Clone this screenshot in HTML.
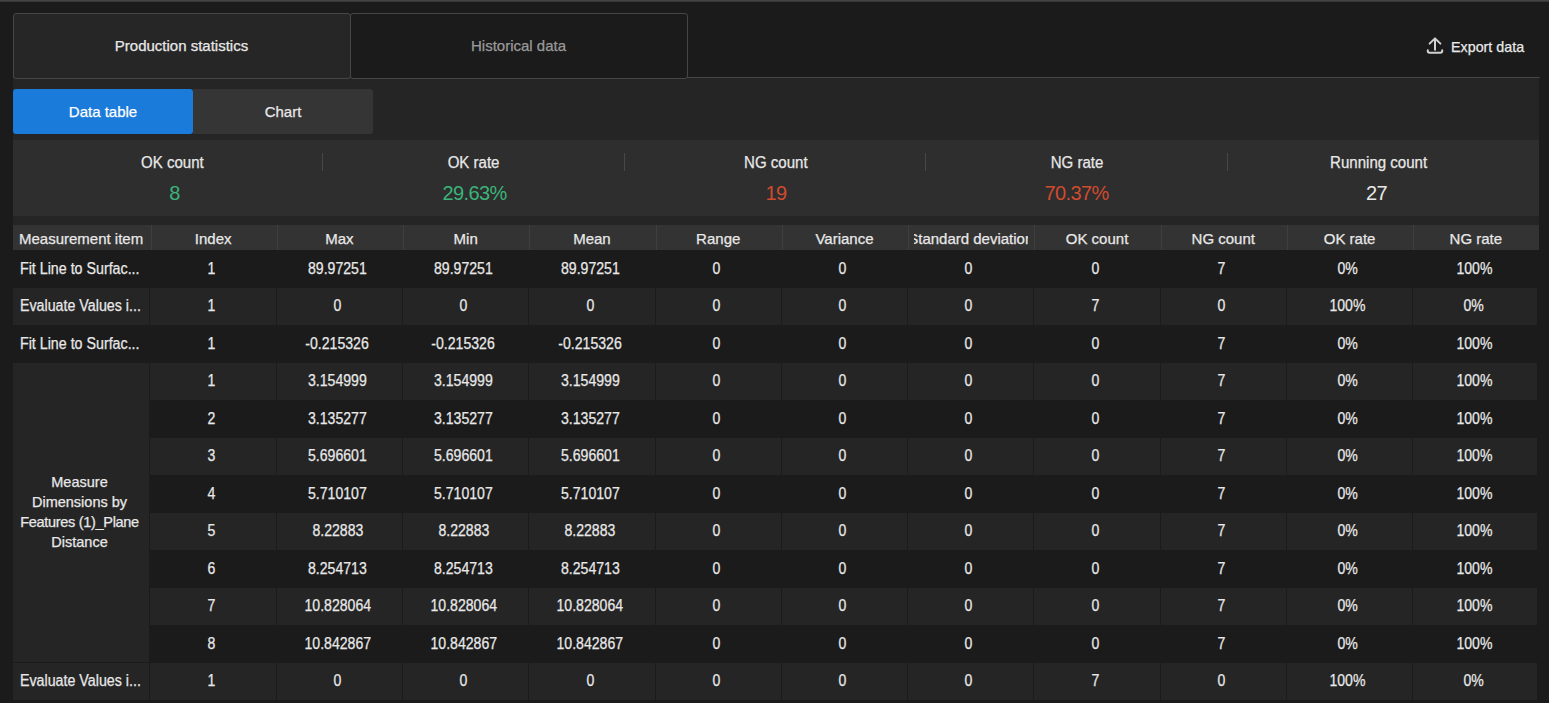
<!DOCTYPE html>
<html><head><meta charset="utf-8"><title>Production statistics</title>
<style>
*{margin:0;padding:0;box-sizing:border-box}
html,body{width:1549px;height:703px;overflow:hidden;background:#1b1b1b;font-family:"Liberation Sans", sans-serif;color:#e8e8e8}
body{-webkit-text-stroke:0.25px currentColor}
.a{position:absolute}
.t{position:absolute;white-space:nowrap;font-size:15px;line-height:18px}
.c{text-align:center}
.cell{position:absolute;overflow:hidden;white-space:nowrap;font-size:15px;line-height:18px;text-align:center}
.d{position:absolute;white-space:nowrap;font-size:16px;line-height:20px;text-align:center}
.d span{display:inline-block;transform:scaleX(.88)}
.d.l{text-align:left} .d.l span{transform-origin:0 50%;transform:scaleX(.89)}
</style></head><body>

<div class="a" style="left:0;top:0;width:1549px;height:2px;background:linear-gradient(#444444,#444444 50%,#2a2a2a)"></div>
<div class="a" style="left:13px;top:77px;width:1526px;height:623px;background:#252525;"></div>
<div class="a" style="left:12.5px;top:76.5px;width:1527px;height:1.5px;background:#464646;border-radius:1px"></div>
<div class="a" style="left:12.5px;top:12.5px;width:338.5px;height:66px;background:#262626;border:1.5px solid #464646;border-radius:3px"></div>
<div class="a" style="left:349.5px;top:12.5px;width:338.5px;height:66px;background:#1b1b1b;border:1.5px solid #464646;border-radius:3px"></div>
<div class="t c" style="left:13px;top:37px;width:337px;">Production statistics</div>
<div class="t c" style="left:350px;top:37px;width:337px;color:#9a9a9a">Historical data</div>
<svg class="a" style="left:1425px;top:36px" width="20" height="20" viewBox="0 0 20 20"><g fill="none" stroke="#d2d2d2" stroke-width="2" stroke-linecap="round" stroke-linejoin="round"><path d="M10 3V13.8"/><path d="M4.6 7.6L10 2.4L15.4 7.6"/><path d="M2.8 14.2V15Q2.8 16.8 4.6 16.8H15.4Q17.2 16.8 17.2 15V14.2"/></g></svg>
<div class="t" style="left:1451px;top:38px;font-size:14.3px">Export data</div>
<div class="a" style="left:13px;top:89px;width:180px;height:45px;background:#1b7bdb;border-radius:3px"></div>
<div class="a" style="left:193px;top:89px;width:180px;height:45px;background:#353535;border-radius:0 3px 3px 0"></div>
<div class="t c" style="left:13px;top:103px;width:180px;color:#fff">Data table</div>
<div class="t c" style="left:193px;top:103px;width:180px;">Chart</div>
<div class="a" style="left:13px;top:140px;width:1526px;height:76px;background:#2e2e2e"></div>
<div class="t c" style="left:72.5px;top:152.5px;width:200px;font-size:16px;line-height:19px"><span style="display:inline-block;transform:scaleX(.94)">OK count</span></div>
<div class="t c" style="left:74.5px;top:182px;width:200px;font-size:20px;letter-spacing:-0.6px;line-height:22px;-webkit-text-stroke:0;color:#3ab479">8</div>
<div class="t c" style="left:373.5px;top:152.5px;width:200px;font-size:16px;line-height:19px"><span style="display:inline-block;transform:scaleX(.94)">OK rate</span></div>
<div class="t c" style="left:374.5px;top:182px;width:200px;font-size:20px;letter-spacing:-0.6px;line-height:22px;-webkit-text-stroke:0;color:#3ab479">29.63%</div>
<div class="t c" style="left:675.5px;top:152.5px;width:200px;font-size:16px;line-height:19px"><span style="display:inline-block;transform:scaleX(.94)">NG count</span></div>
<div class="t c" style="left:676px;top:182px;width:200px;font-size:20px;letter-spacing:-0.6px;line-height:22px;-webkit-text-stroke:0;color:#d24a2f">19</div>
<div class="t c" style="left:977.5px;top:152.5px;width:200px;font-size:16px;line-height:19px"><span style="display:inline-block;transform:scaleX(.94)">NG rate</span></div>
<div class="t c" style="left:976.5px;top:182px;width:200px;font-size:20px;letter-spacing:-0.6px;line-height:22px;-webkit-text-stroke:0;color:#d24a2f">70.37%</div>
<div class="t c" style="left:1278.5px;top:152.5px;width:200px;font-size:16px;line-height:19px"><span style="display:inline-block;transform:scaleX(.94)">Running count</span></div>
<div class="t c" style="left:1276.5px;top:182px;width:200px;font-size:20px;letter-spacing:-0.6px;line-height:22px;-webkit-text-stroke:0;color:#e8e8e8">27</div>
<div class="a" style="left:322px;top:153px;width:1px;height:18px;background:#474747"></div>
<div class="a" style="left:624px;top:153px;width:1px;height:18px;background:#474747"></div>
<div class="a" style="left:925px;top:153px;width:1px;height:18px;background:#474747"></div>
<div class="a" style="left:1227px;top:153px;width:1px;height:18px;background:#474747"></div>
<div class="a" style="left:13px;top:225px;width:1526px;height:25px;background:#333333"></div>
<div class="a" style="left:150.5px;top:225px;width:1px;height:25px;background:#3f3f3f"></div>
<div class="a" style="left:277px;top:225px;width:1px;height:25px;background:#3f3f3f"></div>
<div class="a" style="left:403px;top:225px;width:1px;height:25px;background:#3f3f3f"></div>
<div class="a" style="left:529px;top:225px;width:1px;height:25px;background:#3f3f3f"></div>
<div class="a" style="left:656px;top:225px;width:1px;height:25px;background:#3f3f3f"></div>
<div class="a" style="left:782px;top:225px;width:1px;height:25px;background:#3f3f3f"></div>
<div class="a" style="left:908px;top:225px;width:1px;height:25px;background:#3f3f3f"></div>
<div class="a" style="left:1034px;top:225px;width:1px;height:25px;background:#3f3f3f"></div>
<div class="a" style="left:1161px;top:225px;width:1px;height:25px;background:#3f3f3f"></div>
<div class="a" style="left:1287px;top:225px;width:1px;height:25px;background:#3f3f3f"></div>
<div class="a" style="left:1413px;top:225px;width:1px;height:25px;background:#3f3f3f"></div>
<div class="cell" style="left:13px;top:230px;width:137px;height:18px;text-align:left;padding-left:6px">Measurement item</div>
<div class="cell" style="left:156px;top:230px;width:114.27272727272725px;height:18px;"><span style="display:inline-block;margin:0 -50px;min-width:0">Index</span></div>
<div class="cell" style="left:282.27272727272725px;top:230px;width:114.27272727272725px;height:18px;"><span style="display:inline-block;margin:0 -50px;min-width:0">Max</span></div>
<div class="cell" style="left:408.5454545454545px;top:230px;width:114.27272727272725px;height:18px;"><span style="display:inline-block;margin:0 -50px;min-width:0">Min</span></div>
<div class="cell" style="left:534.8181818181818px;top:230px;width:114.27272727272725px;height:18px;"><span style="display:inline-block;margin:0 -50px;min-width:0">Mean</span></div>
<div class="cell" style="left:661.090909090909px;top:230px;width:114.27272727272737px;height:18px;"><span style="display:inline-block;margin:0 -50px;min-width:0">Range</span></div>
<div class="cell" style="left:787.3636363636364px;top:230px;width:114.27272727272725px;height:18px;"><span style="display:inline-block;margin:0 -50px;min-width:0">Variance</span></div>
<div class="cell" style="left:913.6363636363636px;top:230px;width:114.27272727272737px;height:18px;"><span style="display:inline-block;margin:0 -50px;min-width:0">Standard deviation</span></div>
<div class="cell" style="left:1039.909090909091px;top:230px;width:114.27272727272702px;height:18px;"><span style="display:inline-block;margin:0 -50px;min-width:0">OK count</span></div>
<div class="cell" style="left:1166.181818181818px;top:230px;width:114.27272727272748px;height:18px;"><span style="display:inline-block;margin:0 -50px;min-width:0">NG count</span></div>
<div class="cell" style="left:1292.4545454545455px;top:230px;width:114.27272727272725px;height:18px;"><span style="display:inline-block;margin:0 -50px;min-width:0">OK rate</span></div>
<div class="cell" style="left:1418.7272727272727px;top:230px;width:114.27272727272725px;height:18px;"><span style="display:inline-block;margin:0 -50px;min-width:0">NG rate</span></div>
<div class="a" style="left:13px;top:250px;width:1526px;height:450px;background:#1b1b1b"></div>
<div class="d l" style="left:19.5px;top:258.75px;width:137px;"><span>Fit Line to Surfac...</span></div>
<div class="d" style="left:148.5px;top:258.75px;width:126px;"><span>1</span></div>
<div class="d" style="left:274.5px;top:258.75px;width:126px;"><span>89.97251</span></div>
<div class="d" style="left:400.5px;top:258.75px;width:126px;"><span>89.97251</span></div>
<div class="d" style="left:526.5px;top:258.75px;width:127px;"><span>89.97251</span></div>
<div class="d" style="left:653.5px;top:258.75px;width:126px;"><span>0</span></div>
<div class="d" style="left:779.5px;top:258.75px;width:126px;"><span>0</span></div>
<div class="d" style="left:905.5px;top:258.75px;width:126px;"><span>0</span></div>
<div class="d" style="left:1031.5px;top:258.75px;width:127px;"><span>0</span></div>
<div class="d" style="left:1158.5px;top:258.75px;width:126px;"><span>7</span></div>
<div class="d" style="left:1284.5px;top:258.75px;width:126px;"><span>0%</span></div>
<div class="d" style="left:1410.5px;top:258.75px;width:127px;"><span>100%</span></div>
<div class="a" style="left:13px;top:288px;width:136px;height:37px;background:#252525"></div>
<div class="d l" style="left:19.5px;top:296.25px;width:137px;"><span>Evaluate Values i...</span></div>
<div class="a" style="left:150px;top:288px;width:126px;height:37px;background:#252525"></div>
<div class="d" style="left:148.5px;top:296.25px;width:126px;"><span>1</span></div>
<div class="a" style="left:277px;top:288px;width:125px;height:37px;background:#252525"></div>
<div class="d" style="left:274.5px;top:296.25px;width:126px;"><span>0</span></div>
<div class="a" style="left:403px;top:288px;width:125px;height:37px;background:#252525"></div>
<div class="d" style="left:400.5px;top:296.25px;width:126px;"><span>0</span></div>
<div class="a" style="left:529px;top:288px;width:126px;height:37px;background:#252525"></div>
<div class="d" style="left:526.5px;top:296.25px;width:127px;"><span>0</span></div>
<div class="a" style="left:656px;top:288px;width:125px;height:37px;background:#252525"></div>
<div class="d" style="left:653.5px;top:296.25px;width:126px;"><span>0</span></div>
<div class="a" style="left:782px;top:288px;width:125px;height:37px;background:#252525"></div>
<div class="d" style="left:779.5px;top:296.25px;width:126px;"><span>0</span></div>
<div class="a" style="left:908px;top:288px;width:125px;height:37px;background:#252525"></div>
<div class="d" style="left:905.5px;top:296.25px;width:126px;"><span>0</span></div>
<div class="a" style="left:1034px;top:288px;width:126px;height:37px;background:#252525"></div>
<div class="d" style="left:1031.5px;top:296.25px;width:127px;"><span>7</span></div>
<div class="a" style="left:1161px;top:288px;width:125px;height:37px;background:#252525"></div>
<div class="d" style="left:1158.5px;top:296.25px;width:126px;"><span>0</span></div>
<div class="a" style="left:1287px;top:288px;width:125px;height:37px;background:#252525"></div>
<div class="d" style="left:1284.5px;top:296.25px;width:126px;"><span>100%</span></div>
<div class="a" style="left:1413px;top:288px;width:124px;height:37px;background:#252525"></div>
<div class="d" style="left:1410.5px;top:296.25px;width:127px;"><span>0%</span></div>
<div class="d l" style="left:19.5px;top:333.75px;width:137px;"><span>Fit Line to Surfac...</span></div>
<div class="d" style="left:148.5px;top:333.75px;width:126px;"><span>1</span></div>
<div class="d" style="left:274.5px;top:333.75px;width:126px;"><span>-0.215326</span></div>
<div class="d" style="left:400.5px;top:333.75px;width:126px;"><span>-0.215326</span></div>
<div class="d" style="left:526.5px;top:333.75px;width:127px;"><span>-0.215326</span></div>
<div class="d" style="left:653.5px;top:333.75px;width:126px;"><span>0</span></div>
<div class="d" style="left:779.5px;top:333.75px;width:126px;"><span>0</span></div>
<div class="d" style="left:905.5px;top:333.75px;width:126px;"><span>0</span></div>
<div class="d" style="left:1031.5px;top:333.75px;width:127px;"><span>0</span></div>
<div class="d" style="left:1158.5px;top:333.75px;width:126px;"><span>7</span></div>
<div class="d" style="left:1284.5px;top:333.75px;width:126px;"><span>0%</span></div>
<div class="d" style="left:1410.5px;top:333.75px;width:127px;"><span>100%</span></div>
<div class="a" style="left:150px;top:363px;width:126px;height:37px;background:#252525"></div>
<div class="d" style="left:148.5px;top:371.25px;width:126px;"><span>1</span></div>
<div class="a" style="left:277px;top:363px;width:125px;height:37px;background:#252525"></div>
<div class="d" style="left:274.5px;top:371.25px;width:126px;"><span>3.154999</span></div>
<div class="a" style="left:403px;top:363px;width:125px;height:37px;background:#252525"></div>
<div class="d" style="left:400.5px;top:371.25px;width:126px;"><span>3.154999</span></div>
<div class="a" style="left:529px;top:363px;width:126px;height:37px;background:#252525"></div>
<div class="d" style="left:526.5px;top:371.25px;width:127px;"><span>3.154999</span></div>
<div class="a" style="left:656px;top:363px;width:125px;height:37px;background:#252525"></div>
<div class="d" style="left:653.5px;top:371.25px;width:126px;"><span>0</span></div>
<div class="a" style="left:782px;top:363px;width:125px;height:37px;background:#252525"></div>
<div class="d" style="left:779.5px;top:371.25px;width:126px;"><span>0</span></div>
<div class="a" style="left:908px;top:363px;width:125px;height:37px;background:#252525"></div>
<div class="d" style="left:905.5px;top:371.25px;width:126px;"><span>0</span></div>
<div class="a" style="left:1034px;top:363px;width:126px;height:37px;background:#252525"></div>
<div class="d" style="left:1031.5px;top:371.25px;width:127px;"><span>0</span></div>
<div class="a" style="left:1161px;top:363px;width:125px;height:37px;background:#252525"></div>
<div class="d" style="left:1158.5px;top:371.25px;width:126px;"><span>7</span></div>
<div class="a" style="left:1287px;top:363px;width:125px;height:37px;background:#252525"></div>
<div class="d" style="left:1284.5px;top:371.25px;width:126px;"><span>0%</span></div>
<div class="a" style="left:1413px;top:363px;width:124px;height:37px;background:#252525"></div>
<div class="d" style="left:1410.5px;top:371.25px;width:127px;"><span>100%</span></div>
<div class="d" style="left:148.5px;top:408.75px;width:126px;"><span>2</span></div>
<div class="d" style="left:274.5px;top:408.75px;width:126px;"><span>3.135277</span></div>
<div class="d" style="left:400.5px;top:408.75px;width:126px;"><span>3.135277</span></div>
<div class="d" style="left:526.5px;top:408.75px;width:127px;"><span>3.135277</span></div>
<div class="d" style="left:653.5px;top:408.75px;width:126px;"><span>0</span></div>
<div class="d" style="left:779.5px;top:408.75px;width:126px;"><span>0</span></div>
<div class="d" style="left:905.5px;top:408.75px;width:126px;"><span>0</span></div>
<div class="d" style="left:1031.5px;top:408.75px;width:127px;"><span>0</span></div>
<div class="d" style="left:1158.5px;top:408.75px;width:126px;"><span>7</span></div>
<div class="d" style="left:1284.5px;top:408.75px;width:126px;"><span>0%</span></div>
<div class="d" style="left:1410.5px;top:408.75px;width:127px;"><span>100%</span></div>
<div class="a" style="left:150px;top:438px;width:126px;height:37px;background:#252525"></div>
<div class="d" style="left:148.5px;top:446.25px;width:126px;"><span>3</span></div>
<div class="a" style="left:277px;top:438px;width:125px;height:37px;background:#252525"></div>
<div class="d" style="left:274.5px;top:446.25px;width:126px;"><span>5.696601</span></div>
<div class="a" style="left:403px;top:438px;width:125px;height:37px;background:#252525"></div>
<div class="d" style="left:400.5px;top:446.25px;width:126px;"><span>5.696601</span></div>
<div class="a" style="left:529px;top:438px;width:126px;height:37px;background:#252525"></div>
<div class="d" style="left:526.5px;top:446.25px;width:127px;"><span>5.696601</span></div>
<div class="a" style="left:656px;top:438px;width:125px;height:37px;background:#252525"></div>
<div class="d" style="left:653.5px;top:446.25px;width:126px;"><span>0</span></div>
<div class="a" style="left:782px;top:438px;width:125px;height:37px;background:#252525"></div>
<div class="d" style="left:779.5px;top:446.25px;width:126px;"><span>0</span></div>
<div class="a" style="left:908px;top:438px;width:125px;height:37px;background:#252525"></div>
<div class="d" style="left:905.5px;top:446.25px;width:126px;"><span>0</span></div>
<div class="a" style="left:1034px;top:438px;width:126px;height:37px;background:#252525"></div>
<div class="d" style="left:1031.5px;top:446.25px;width:127px;"><span>0</span></div>
<div class="a" style="left:1161px;top:438px;width:125px;height:37px;background:#252525"></div>
<div class="d" style="left:1158.5px;top:446.25px;width:126px;"><span>7</span></div>
<div class="a" style="left:1287px;top:438px;width:125px;height:37px;background:#252525"></div>
<div class="d" style="left:1284.5px;top:446.25px;width:126px;"><span>0%</span></div>
<div class="a" style="left:1413px;top:438px;width:124px;height:37px;background:#252525"></div>
<div class="d" style="left:1410.5px;top:446.25px;width:127px;"><span>100%</span></div>
<div class="d" style="left:148.5px;top:483.75px;width:126px;"><span>4</span></div>
<div class="d" style="left:274.5px;top:483.75px;width:126px;"><span>5.710107</span></div>
<div class="d" style="left:400.5px;top:483.75px;width:126px;"><span>5.710107</span></div>
<div class="d" style="left:526.5px;top:483.75px;width:127px;"><span>5.710107</span></div>
<div class="d" style="left:653.5px;top:483.75px;width:126px;"><span>0</span></div>
<div class="d" style="left:779.5px;top:483.75px;width:126px;"><span>0</span></div>
<div class="d" style="left:905.5px;top:483.75px;width:126px;"><span>0</span></div>
<div class="d" style="left:1031.5px;top:483.75px;width:127px;"><span>0</span></div>
<div class="d" style="left:1158.5px;top:483.75px;width:126px;"><span>7</span></div>
<div class="d" style="left:1284.5px;top:483.75px;width:126px;"><span>0%</span></div>
<div class="d" style="left:1410.5px;top:483.75px;width:127px;"><span>100%</span></div>
<div class="a" style="left:150px;top:513px;width:126px;height:37px;background:#252525"></div>
<div class="d" style="left:148.5px;top:521.25px;width:126px;"><span>5</span></div>
<div class="a" style="left:277px;top:513px;width:125px;height:37px;background:#252525"></div>
<div class="d" style="left:274.5px;top:521.25px;width:126px;"><span>8.22883</span></div>
<div class="a" style="left:403px;top:513px;width:125px;height:37px;background:#252525"></div>
<div class="d" style="left:400.5px;top:521.25px;width:126px;"><span>8.22883</span></div>
<div class="a" style="left:529px;top:513px;width:126px;height:37px;background:#252525"></div>
<div class="d" style="left:526.5px;top:521.25px;width:127px;"><span>8.22883</span></div>
<div class="a" style="left:656px;top:513px;width:125px;height:37px;background:#252525"></div>
<div class="d" style="left:653.5px;top:521.25px;width:126px;"><span>0</span></div>
<div class="a" style="left:782px;top:513px;width:125px;height:37px;background:#252525"></div>
<div class="d" style="left:779.5px;top:521.25px;width:126px;"><span>0</span></div>
<div class="a" style="left:908px;top:513px;width:125px;height:37px;background:#252525"></div>
<div class="d" style="left:905.5px;top:521.25px;width:126px;"><span>0</span></div>
<div class="a" style="left:1034px;top:513px;width:126px;height:37px;background:#252525"></div>
<div class="d" style="left:1031.5px;top:521.25px;width:127px;"><span>0</span></div>
<div class="a" style="left:1161px;top:513px;width:125px;height:37px;background:#252525"></div>
<div class="d" style="left:1158.5px;top:521.25px;width:126px;"><span>7</span></div>
<div class="a" style="left:1287px;top:513px;width:125px;height:37px;background:#252525"></div>
<div class="d" style="left:1284.5px;top:521.25px;width:126px;"><span>0%</span></div>
<div class="a" style="left:1413px;top:513px;width:124px;height:37px;background:#252525"></div>
<div class="d" style="left:1410.5px;top:521.25px;width:127px;"><span>100%</span></div>
<div class="d" style="left:148.5px;top:558.75px;width:126px;"><span>6</span></div>
<div class="d" style="left:274.5px;top:558.75px;width:126px;"><span>8.254713</span></div>
<div class="d" style="left:400.5px;top:558.75px;width:126px;"><span>8.254713</span></div>
<div class="d" style="left:526.5px;top:558.75px;width:127px;"><span>8.254713</span></div>
<div class="d" style="left:653.5px;top:558.75px;width:126px;"><span>0</span></div>
<div class="d" style="left:779.5px;top:558.75px;width:126px;"><span>0</span></div>
<div class="d" style="left:905.5px;top:558.75px;width:126px;"><span>0</span></div>
<div class="d" style="left:1031.5px;top:558.75px;width:127px;"><span>0</span></div>
<div class="d" style="left:1158.5px;top:558.75px;width:126px;"><span>7</span></div>
<div class="d" style="left:1284.5px;top:558.75px;width:126px;"><span>0%</span></div>
<div class="d" style="left:1410.5px;top:558.75px;width:127px;"><span>100%</span></div>
<div class="a" style="left:150px;top:588px;width:126px;height:37px;background:#252525"></div>
<div class="d" style="left:148.5px;top:596.25px;width:126px;"><span>7</span></div>
<div class="a" style="left:277px;top:588px;width:125px;height:37px;background:#252525"></div>
<div class="d" style="left:274.5px;top:596.25px;width:126px;"><span>10.828064</span></div>
<div class="a" style="left:403px;top:588px;width:125px;height:37px;background:#252525"></div>
<div class="d" style="left:400.5px;top:596.25px;width:126px;"><span>10.828064</span></div>
<div class="a" style="left:529px;top:588px;width:126px;height:37px;background:#252525"></div>
<div class="d" style="left:526.5px;top:596.25px;width:127px;"><span>10.828064</span></div>
<div class="a" style="left:656px;top:588px;width:125px;height:37px;background:#252525"></div>
<div class="d" style="left:653.5px;top:596.25px;width:126px;"><span>0</span></div>
<div class="a" style="left:782px;top:588px;width:125px;height:37px;background:#252525"></div>
<div class="d" style="left:779.5px;top:596.25px;width:126px;"><span>0</span></div>
<div class="a" style="left:908px;top:588px;width:125px;height:37px;background:#252525"></div>
<div class="d" style="left:905.5px;top:596.25px;width:126px;"><span>0</span></div>
<div class="a" style="left:1034px;top:588px;width:126px;height:37px;background:#252525"></div>
<div class="d" style="left:1031.5px;top:596.25px;width:127px;"><span>0</span></div>
<div class="a" style="left:1161px;top:588px;width:125px;height:37px;background:#252525"></div>
<div class="d" style="left:1158.5px;top:596.25px;width:126px;"><span>7</span></div>
<div class="a" style="left:1287px;top:588px;width:125px;height:37px;background:#252525"></div>
<div class="d" style="left:1284.5px;top:596.25px;width:126px;"><span>0%</span></div>
<div class="a" style="left:1413px;top:588px;width:124px;height:37px;background:#252525"></div>
<div class="d" style="left:1410.5px;top:596.25px;width:127px;"><span>100%</span></div>
<div class="d" style="left:148.5px;top:633.75px;width:126px;"><span>8</span></div>
<div class="d" style="left:274.5px;top:633.75px;width:126px;"><span>10.842867</span></div>
<div class="d" style="left:400.5px;top:633.75px;width:126px;"><span>10.842867</span></div>
<div class="d" style="left:526.5px;top:633.75px;width:127px;"><span>10.842867</span></div>
<div class="d" style="left:653.5px;top:633.75px;width:126px;"><span>0</span></div>
<div class="d" style="left:779.5px;top:633.75px;width:126px;"><span>0</span></div>
<div class="d" style="left:905.5px;top:633.75px;width:126px;"><span>0</span></div>
<div class="d" style="left:1031.5px;top:633.75px;width:127px;"><span>0</span></div>
<div class="d" style="left:1158.5px;top:633.75px;width:126px;"><span>7</span></div>
<div class="d" style="left:1284.5px;top:633.75px;width:126px;"><span>0%</span></div>
<div class="d" style="left:1410.5px;top:633.75px;width:127px;"><span>100%</span></div>
<div class="a" style="left:13px;top:663px;width:136px;height:37px;background:#252525"></div>
<div class="d l" style="left:19.5px;top:671.25px;width:137px;"><span>Evaluate Values i...</span></div>
<div class="a" style="left:150px;top:663px;width:126px;height:37px;background:#252525"></div>
<div class="d" style="left:148.5px;top:671.25px;width:126px;"><span>1</span></div>
<div class="a" style="left:277px;top:663px;width:125px;height:37px;background:#252525"></div>
<div class="d" style="left:274.5px;top:671.25px;width:126px;"><span>0</span></div>
<div class="a" style="left:403px;top:663px;width:125px;height:37px;background:#252525"></div>
<div class="d" style="left:400.5px;top:671.25px;width:126px;"><span>0</span></div>
<div class="a" style="left:529px;top:663px;width:126px;height:37px;background:#252525"></div>
<div class="d" style="left:526.5px;top:671.25px;width:127px;"><span>0</span></div>
<div class="a" style="left:656px;top:663px;width:125px;height:37px;background:#252525"></div>
<div class="d" style="left:653.5px;top:671.25px;width:126px;"><span>0</span></div>
<div class="a" style="left:782px;top:663px;width:125px;height:37px;background:#252525"></div>
<div class="d" style="left:779.5px;top:671.25px;width:126px;"><span>0</span></div>
<div class="a" style="left:908px;top:663px;width:125px;height:37px;background:#252525"></div>
<div class="d" style="left:905.5px;top:671.25px;width:126px;"><span>0</span></div>
<div class="a" style="left:1034px;top:663px;width:126px;height:37px;background:#252525"></div>
<div class="d" style="left:1031.5px;top:671.25px;width:127px;"><span>7</span></div>
<div class="a" style="left:1161px;top:663px;width:125px;height:37px;background:#252525"></div>
<div class="d" style="left:1158.5px;top:671.25px;width:126px;"><span>0</span></div>
<div class="a" style="left:1287px;top:663px;width:125px;height:37px;background:#252525"></div>
<div class="d" style="left:1284.5px;top:671.25px;width:126px;"><span>100%</span></div>
<div class="a" style="left:1413px;top:663px;width:124px;height:37px;background:#252525"></div>
<div class="d" style="left:1410.5px;top:671.25px;width:127px;"><span>0%</span></div>
<div class="a" style="left:13px;top:363px;width:136px;height:299px;background:#252525"></div>
<div class="t c" style="left:11.5px;top:471.5px;width:136px;line-height:20px;font-size:14.5px">Measure<br>Dimensions by<br><span style="letter-spacing:-0.3px">Features (1)_Plane</span><br>Distance</div>
</body></html>
